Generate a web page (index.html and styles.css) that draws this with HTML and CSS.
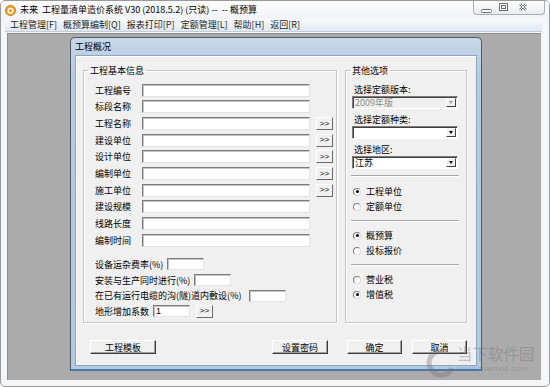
FILE: index.html
```html
<!DOCTYPE html>
<html lang="zh-CN">

<head>
  <meta charset="UTF-8" />
  <title>工程概况</title>
  <link rel="stylesheet" href="styles.css">
</head>

<body>
  <div class="window">
    <div class="titlebar">
      <svg class="app-icon" width="11" height="11" viewBox="0 0 11 11">
        <circle cx="5.5" cy="5.5" r="5" fill="#f6a41f" stroke="#d8730c" stroke-width="1" />
        <circle cx="5.5" cy="5.8" r="2.4" fill="none" stroke="#fff" stroke-width="1.2" />
      </svg>
      <span class="title">未来&nbsp; 工程量清单造价系统 V30 (2018.5.2) (只读) --&nbsp; -- 概预算</span>
      <div class="caption">
        <svg width="70" height="13" viewBox="0 0 70 13">
          <rect x="7.5" y="8.5" width="10" height="3" rx="1" fill="#fff" stroke="#66707c" />
          <rect x="25.5" y="2.5" width="8" height="7" fill="#fff" stroke="#66707c" />
          <rect x="27.5" y="4.5" width="4" height="3" fill="none" stroke="#66707c" />
          <path d="M46 3l6 6M52 3l-6 6" stroke="#66707c" stroke-width="2.4" />
          <path d="M46 3l6 6M52 3l-6 6" stroke="#fff" stroke-width="0.9" />
        </svg>
      </div>
    </div>

    <div class="menubar">
      <span class="menu-item">工程管理[F]</span>
      <span class="menu-item">概预算编制[Q]</span>
      <span class="menu-item">报表打印[P]</span>
      <span class="menu-item">定额管理[L]</span>
      <span class="menu-item">帮助[H]</span>
      <span class="menu-item">返回[R]</span>
    </div>

    <div class="mdi">
      <div class="dialog">
        <div class="dlg-title">工程概况</div>
        <div class="dlg-body">
          <div class="groups">
            <fieldset class="group basic">
              <legend>工程基本信息</legend>
              <div class="basic-grid">
                <label>工程编号</label><span class="edit"></span><span></span>
                <label>标段名称</label><span class="edit"></span><span></span>
                <label>工程名称</label><span class="edit"></span><button class="more">&gt;&gt;</button>
                <label>建设单位</label><span class="edit"></span><button class="more">&gt;&gt;</button>
                <label>设计单位</label><span class="edit"></span><button class="more">&gt;&gt;</button>
                <label>编制单位</label><span class="edit"></span><button class="more">&gt;&gt;</button>
                <label>施工单位</label><span class="edit"></span><button class="more">&gt;&gt;</button>
                <label>建设规模</label><span class="edit"></span><span></span>
                <label>线路长度</label><span class="edit"></span><span></span>
                <label>编制时间</label><span class="edit"></span><span></span>
              </div>
              <div class="extra">
                <div class="extra-row"><label>设备运杂费率(%)</label><span class="edit short"></span></div>
                <div class="extra-row"><label>安装与生产同时进行(%)</label><span class="edit short"></span></div>
                <div class="extra-row"><label>在已有运行电缆的沟(隧)道内敷设(%)</label><span class="edit short gap"></span></div>
                <div class="extra-row">
                  <label>地形增加系数</label><span class="edit short">1</span>
                  <button class="more">&gt;&gt;</button>
                </div>
              </div>
            </fieldset>

            <fieldset class="group other">
              <legend>其他选项</legend>
              <div class="other-body">
                <div class="field-label">选择定额版本:</div>
                <div class="combo disabled"><span>2009年版</span><i class="drop"></i></div>
                <div class="field-label">选择定额种类:</div>
                <div class="combo"><span></span><i class="drop"></i></div>
                <div class="field-label">选择地区:</div>
                <div class="combo"><span>江苏</span><i class="drop"></i></div>

                <div class="sep first"></div>
                <div class="radio-group">
                  <div class="radio checked"><i></i>工程单位</div>
                  <div class="radio"><i></i>定额单位</div>
                </div>
                <div class="sep"></div>
                <div class="radio-group">
                  <div class="radio checked"><i></i>概预算</div>
                  <div class="radio"><i></i>投标报价</div>
                </div>
                <div class="sep"></div>
                <div class="radio-group">
                  <div class="radio"><i></i>营业税</div>
                  <div class="radio checked"><i></i>增值税</div>
                </div>
              </div>
            </fieldset>
          </div>

          <div class="actions">
            <button class="btn btn-template">工程模板</button>
            <button class="btn btn-password">设置密码</button>
            <button class="btn btn-ok">确定</button>
            <button class="btn btn-cancel">取消</button>
          </div>
        </div>
      </div>
    </div>

    <!-- 水印 -->
    <div class="watermark">
      <svg class="wm-logo" width="34" height="30" viewBox="0 0 34 30">
        <path d="M22 4 A12 12 0 1 0 28 20" fill="none" stroke="rgba(110,110,110,0.35)" stroke-width="5" />
      </svg>
      <div class="wm-text">
        <div class="wm-name">当下软件园</div>
        <div class="wm-url">www.downxia.com</div>
      </div>
    </div>
  </div>
</body>

</html>
```

FILE: styles.css
```css
body {
  margin: 0;
  font-family: "Noto Sans CJK SC", "Noto Sans", sans-serif;
  font-size: 9px;
  color: #000;
  background: #fff;
}

.window {
  position: relative;
  width: 550px;
  height: 387px;
  box-sizing: border-box;
  border: 1px solid #9a9a9a;
  border-radius: 5px;
  background: #f5f6f8;
  display: flex;
  flex-direction: column;
  padding: 0 8px 6px 6px;
  overflow: hidden;
}

/* 标题栏 */
.titlebar {
  height: 18px;
  display: flex;
  align-items: center;
  margin: 0 -8px 0 -6px;
  padding-left: 4px;
  background: linear-gradient(#fdfdfe, #f1f3f6);
}

.app-icon {
  margin-right: 4px;
  flex: none;
}

.title {
  line-height: 18px;
  white-space: nowrap;
}

.caption {
  margin-left: auto;
  margin-right: 4px;
  align-self: flex-start;
  width: 70px;
  height: 13px;
  border: 1px solid #a9aeb5;
  border-top: 0;
  border-radius: 0 0 4px 4px;
  background: linear-gradient(#ffffff, #e9ecf0);
  display: flex;
}

/* 菜单 */
.menubar {
  height: 13px;
  display: flex;
  align-items: center;
  margin: 0 -1px 0 -2px;
  padding-left: 2px;
  background: linear-gradient(#f8fafd, #e1e7f1);
  border-bottom: 1px solid #c3cddb;
  box-sizing: border-box;
}

.menu-item {
  padding: 0 3px;
  line-height: 12px;
  color: #1e1e1e;
  white-space: nowrap;
}

.mdi {
  flex: 1;
  margin-top: 1px;
  background: #ababab;
  border-left: 1px solid #8c8c8c;
  border-top: 1px solid #8c8c8c;
  box-sizing: border-box;
}

/* 子窗口 */
.dialog {
  margin: 3px 0 0 62px;
  width: 412px;
  height: 334px;
  box-sizing: border-box;
  border: 1px solid #4f5b68;
  border-bottom: 2px solid #4b78ab;
  border-radius: 5px 5px 0 0;
  background: linear-gradient(#c9d8e8, #b7cbe2 30px, #b3c9e2);
  padding: 0 4px 3px;
  display: flex;
  flex-direction: column;
}

.dlg-title {
  height: 17px;
  line-height: 17px;
  color: #000;
}

.dlg-body {
  flex: 1;
  background: #f0f0f0;
  border: 1px solid #8ca5c0;
  box-shadow: inset 1px 1px #fff;
}

.groups {
  display: flex;
  gap: 8px;
  padding: 9px 0 0 7px;
}

.group {
  margin: 0;
  padding: 0;
  min-width: 0;
  height: 258px;
  box-sizing: border-box;
  border: 1px solid #c6c6c6;
  box-shadow: inset 1px 1px #fff, 1px 1px #fff;
}

.group legend {
  margin-left: 4px;
  padding: 0 2px;
  line-height: 11px;
}

.basic {
  width: 254px;
}

.other {
  width: 122px;
}

.basic-grid {
  display: grid;
  grid-template-columns: 41px 168px 17px;
  grid-auto-rows: 16.67px;
  column-gap: 6px;
  align-items: center;
  padding: 6px 0 0 11px;
}

.basic-grid label,
.extra-row label {
  white-space: nowrap;
}

.edit {
  display: block;
  height: 13px;
  box-sizing: border-box;
  background: #fff;
  border: 1px solid;
  border-color: #7c7c7c #e4e4e4 #e4e4e4 #7c7c7c;
  box-shadow: inset 1px 1px #c4c4c4;
  padding-left: 2px;
  line-height: 11px;
  font-family: "Liberation Sans", sans-serif;
}

.edit.short {
  width: 37px;
  height: 12px;
}

.edit.gap {
  margin-left: 4px;
}

.more {
  width: 17px;
  height: 13px;
  padding: 0;
  box-sizing: border-box;
  background: #f0f0f0;
  border: 1px solid;
  border-color: #fff #6a6a6a #6a6a6a #fff;
  font-family: "Liberation Sans", sans-serif;
  font-size: 8px;
  line-height: 10px;
  color: #000;
}

.extra {
  margin-top: 8px;
  padding-left: 11px;
}

.extra-row {
  height: 15.7px;
  display: flex;
  align-items: center;
  gap: 4px;
}

.extra-row .more {
  margin-left: 2px;
}

/* 其他选项 */
.other-body {
  padding: 8px 8px 0 6px;
}

.field-label {
  line-height: 11px;
  padding-left: 2px;
}

.combo {
  height: 13px;
  box-sizing: border-box;
  margin: 1px 0 5px;
  background: #fff;
  border: 1px solid;
  border-color: #7c7c7c #fff #fff #7c7c7c;
  box-shadow: inset 1px 1px #404040;
  display: flex;
  align-items: center;
  padding: 0 1px 0 2px;
  line-height: 11px;
}

.combo.disabled {
  background: #f0f0f0;
  color: #8d8d8d;
}

.drop {
  margin-left: auto;
  width: 10px;
  height: 9px;
  box-sizing: border-box;
  background: #f0f0f0;
  border: 1px solid;
  border-color: #fff #404040 #404040 #fff;
  display: flex;
  align-items: center;
  justify-content: center;
}

.drop::after {
  content: "";
  border-left: 2.5px solid transparent;
  border-right: 2.5px solid transparent;
  border-top: 3px solid #000;
}

.disabled .drop::after {
  border-top-color: #a0a0a0;
}

.sep {
  margin: 0 -1px;
  border-top: 1px solid #a8a8a8;
  border-bottom: 1px solid #fff;
}

.sep.first {
  margin-top: 6px;
}

.radio-group {
  padding: 6px 0 6px;
}

.sep.first + .radio-group {
  padding-top: 7px;
}

.radio {
  height: 15px;
  display: flex;
  align-items: center;
  gap: 5px;
  padding-left: 1px;
}

.radio i {
  width: 8px;
  height: 8px;
  box-sizing: border-box;
  border-radius: 50%;
  border: 1px solid;
  border-color: #7e7e7e #dcdcdc #dcdcdc #7e7e7e;
  background: #fff;
  display: flex;
  align-items: center;
  justify-content: center;
}

.radio.checked i::after {
  content: "";
  width: 3px;
  height: 3px;
  border-radius: 50%;
  background: #000;
}

/* 底部按钮 */
.actions {
  display: flex;
  padding: 17px 0 0 14px;
}

.btn {
  height: 14px;
  box-sizing: border-box;
  padding: 0;
  background: #f0f0f0;
  border: 1px solid;
  border-color: #fff #3c3c3c #3c3c3c #fff;
  box-shadow: inset -1px -1px #a0a0a0;
  font-family: "Noto Sans CJK SC", sans-serif;
  font-size: 9px;
  line-height: 11px;
  color: #000;
}

.btn-template {
  width: 66px;
}

.btn-password {
  width: 56px;
  margin-left: 116px;
}

.btn-ok {
  width: 55px;
  margin-left: 19px;
}

.btn-cancel {
  width: 55px;
  margin-left: 10px;
}

/* 水印 */
.watermark {
  position: absolute;
  left: 423px;
  top: 344px;
  display: flex;
  align-items: flex-start;
  pointer-events: none;
}

.wm-logo {
  margin-top: 3px;
}

.wm-text {
  margin-left: -1px;
  color: rgba(110, 110, 110, 0.38);
}

.wm-name {
  font-size: 15.5px;
  line-height: 17px;
  letter-spacing: 0;
}

.wm-url {
  font-family: "Liberation Sans", sans-serif;
  font-size: 8px;
  line-height: 9px;
  margin-top: 2px;
  letter-spacing: 0.3px;
}
```
